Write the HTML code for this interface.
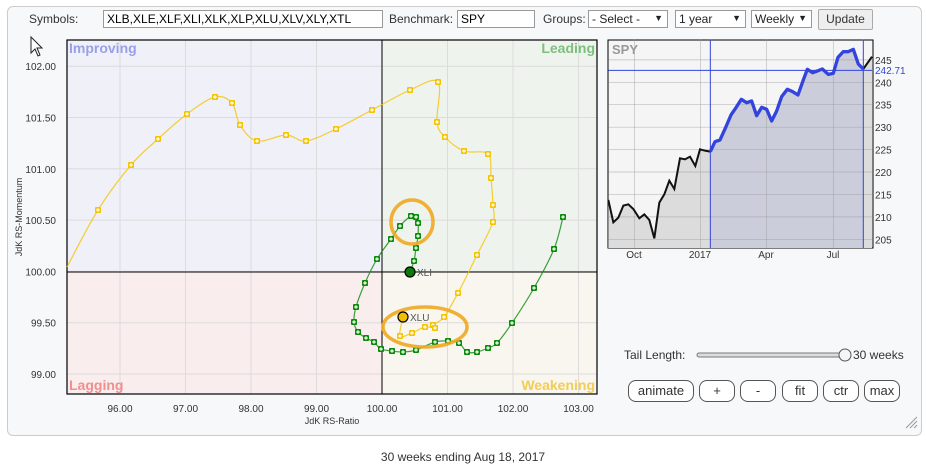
<!DOCTYPE html>
<html><head><meta charset="utf-8"><style>
body{margin:0;width:926px;height:471px;background:#fff;font-family:"Liberation Sans",sans-serif;position:relative;overflow:hidden}
.panel{position:absolute;left:7px;top:6px;width:913px;height:428px;border:1px solid #ccc;border-radius:6px;background:#f7f8fa}
.t{position:absolute;font-size:12px;color:#333}
input.f{position:absolute;height:18px;border:1px solid #999;background:#fff;font:12px "Liberation Sans",sans-serif;padding:0 3px;box-sizing:border-box;line-height:18px}
.sel{position:absolute;height:18px;border:1px solid #999;background:#fff;font-size:12px;box-sizing:border-box;padding:1px 3px;color:#222}
.sel:after{content:"▼";position:absolute;right:4px;top:2px;font-size:9px}
.btn{position:absolute;height:22px;border:1px solid #555;border-radius:8px;background:#fff;font-size:13px;text-align:center;line-height:20px;box-sizing:border-box;color:#333}
</style></head><body>
<div class="panel"></div>
<div class="t" style="left:29px;top:12px">Symbols:</div>
<input class="f" style="left:103px;top:10px;width:280px" value="XLB,XLE,XLF,XLI,XLK,XLP,XLU,XLV,XLY,XTL">
<div class="t" style="left:389px;top:12px">Benchmark:</div>
<input class="f" style="left:457px;top:10px;width:78px" value="SPY">
<div class="t" style="left:543px;top:12px">Groups:</div>
<div class="sel" style="left:588px;top:10px;width:80px">- Select -</div>
<div class="sel" style="left:675px;top:10px;width:71px">1 year</div>
<div class="sel" style="left:751px;top:10px;width:61px">Weekly</div>
<div class="btn" style="left:818px;top:9px;width:55px;height:21px;border-radius:2px;border-color:#aaa;background:#eee;font-size:12px;line-height:19px">Update</div>
<svg width="926" height="471" style="position:absolute;left:0;top:0" id="s" font-family="Liberation Sans, sans-serif">
<path d="M31 37 L31 53 L35 49 L38 56 L40 55 L37 48 L42 48 Z" fill="#fff" stroke="#222" stroke-width="1"/>
<rect x="67" y="40" width="315" height="232" fill="#eff0f8"/>
<rect x="382" y="40" width="215" height="232" fill="#eef3ee"/>
<rect x="67" y="272" width="315" height="122" fill="#f9eded"/>
<rect x="382" y="272" width="215" height="122" fill="#f8f6ee"/>
<g stroke="#dcdcdc" stroke-width="1" id="grid"></g>
<rect x="67" y="40" width="530" height="354" fill="none" stroke="#000" stroke-width="1.2"/>
<line x1="382" y1="40" x2="382" y2="394" stroke="#000"/>
<line x1="67" y1="272" x2="597" y2="272" stroke="#000"/>
<g font-size="14" font-weight="bold">
<text x="69" y="53" fill="#9aa0e8">Improving</text>
<text x="595" y="53" fill="#7cc07c" text-anchor="end">Leading</text>
<text x="69" y="390" fill="#f08f8f">Lagging</text>
<text x="595" y="390" fill="#f2cc55" text-anchor="end">Weakening</text>
</g>
<g font-size="10" fill="#333" id="ax"></g>
<text x="22" y="217" font-size="9" fill="#333" transform="rotate(-90 22 217)" text-anchor="middle">JdK RS-Momentum</text>
<text x="332" y="424" font-size="9" fill="#333" text-anchor="middle">JdK RS-Ratio</text>
<g id="tails"></g>
<ellipse cx="412" cy="222" rx="21" ry="22" fill="none" stroke="#f0a820" stroke-width="3.5" opacity=".9"/>
<ellipse cx="425" cy="327" rx="42" ry="20" fill="none" stroke="#f0a820" stroke-width="3.5" opacity=".9"/>
<circle cx="410" cy="272" r="5" fill="#0a7a0a" stroke="#000" stroke-width="1.2"/>
<text x="417" y="276" font-size="10" fill="#555">XLI</text>
<circle cx="403" cy="317" r="5" fill="#f0c000" stroke="#000" stroke-width="1.2"/>
<text x="410" y="321" font-size="10" fill="#555">XLU</text>
<rect x="608" y="40" width="265" height="208" fill="#f5f5f5" stroke="#000"/>
<g id="spy" transform="translate(600,30) scale(0.3333)"></g>
<text x="612" y="54" font-size="13" font-weight="bold" fill="#999">SPY</text>
<g font-size="10" fill="#333" id="sax"></g>
<text x="875" y="74" font-size="10" fill="#3344dd">242.71</text>
<text x="624" y="359" font-size="12" fill="#333">Tail Length:</text>
<rect x="697" y="353" width="148" height="4" rx="2" fill="#ddd" stroke="#777"/>
<circle cx="845" cy="355" r="6" fill="#f5f5f5" stroke="#555"/>
<text x="853" y="359" font-size="12" fill="#333">30 weeks</text>
<g stroke="#999" stroke-width="1"><line x1="906" y1="428" x2="917" y2="417"/><line x1="910" y1="428" x2="917" y2="421"/><line x1="914" y1="428" x2="917" y2="425"/></g>
<text x="463" y="461" font-size="12" fill="#333" text-anchor="middle">30 weeks ending Aug 18, 2017</text>
</svg>
<div class="btn" style="left:628px;top:380px;width:66px">animate</div>
<div class="btn" style="left:699px;top:380px;width:36px">+</div>
<div class="btn" style="left:740px;top:380px;width:36px">-</div>
<div class="btn" style="left:782px;top:380px;width:36px">fit</div>
<div class="btn" style="left:823px;top:380px;width:36px">ctr</div>
<div class="btn" style="left:864px;top:380px;width:36px">max</div>
<script>
var NS="http://www.w3.org/2000/svg";
function el(p,t,a){var e=document.createElementNS(NS,t);for(var k in a)e.setAttribute(k,a[k]);p.appendChild(e);return e}
var g=document.getElementById('grid'),ax=document.getElementById('ax');
for(var v=96;v<=103;v++){var x=382+(v-100)*65.5;el(g,'line',{x1:x,y1:40,x2:x,y2:394});var t=el(ax,'text',{x:x,y:412,'text-anchor':'middle'});t.textContent=v.toFixed(2)}
for(var i=0;i<=6;i++){var val=99+i*0.5,y=374-i*51.3;el(g,'line',{x1:67,y1:y,x2:597,y2:y});var t=el(ax,'text',{x:56,y:y+4,'text-anchor':'end'});t.textContent=val.toFixed(2)}
function cr(p){var d="M"+p[0][0]+" "+p[0][1];for(var i=0;i<p.length-1;i++){var p0=p[i-1]||p[i],p1=p[i],p2=p[i+1],p3=p[i+2]||p2;d+=" C"+(p1[0]+(p2[0]-p0[0])/6)+" "+(p1[1]+(p2[1]-p0[1])/6)+" "+(p2[0]-(p3[0]-p1[0])/6)+" "+(p2[1]-(p3[1]-p1[1])/6)+" "+p2[0]+" "+p2[1]}return d}
var Y=[[67,267],[98,210],[131,165],[158,139],[187,114],[215,97],[232,103],[240,125],[257,141],[286,135],[306,141],[336,129],[372,110],[410,90],[438,82],[437,122],[445,137],[464,151],[488,154],[491,178],[493,205],[493,222],[477,255],[458,293],[444,317],[433,325],[435,328],[425,327],[412,333],[400,336],[403,317]];
var G=[[563,217],[554,249],[534,288],[512,323],[497,343],[488,348],[477,352],[467,352],[459,343],[448,341],[435,342],[416,350],[403,352],[392,351],[381,349],[374,342],[366,338],[358,332],[354,322],[356,307],[365,283],[377,259],[391,239],[400,226],[411,216],[416,217],[418,223],[418,236],[416,248],[414,261],[410,272]];
var tl=document.getElementById('tails');
[[Y,'#f5c400',1],[G,'#0a8a0a',0]].forEach(function(s){var p=s[0],c=s[1];el(tl,'path',{d:cr(p),fill:'none',stroke:c,'stroke-width':1.2,opacity:.8});
for(var i=s[2];i<p.length-1;i++){var x=p[i][0],y=p[i][1];el(tl,'rect',{x:x-3,y:y-3,width:6,height:6,fill:c,rx:1});el(tl,'path',{d:'M'+(x-1.8)+' '+y+'H'+(x+1.8)+'M'+x+' '+(y-1.8)+'V'+(y+1.8),stroke:'#fff','stroke-width':1.2})}});
var sp=document.getElementById('spy'),sax=document.getElementById('sax');
var B=[[25,510],[40,577],[55,563],[70,527],[85,523],[100,537],[118,565],[133,553],[148,570],[163,625],[178,518],[193,493],[208,452],[223,477],[240,385],[255,388],[270,380],[286,408],[300,358],[315,362],[331,365]];
var L=[[331,365],[345,335],[360,330],[375,297],[393,255],[408,233],[424,208],[440,218],[455,213],[470,257],[485,232],[500,238],[515,273],[530,243],[545,200],[562,178],[578,185],[594,195],[610,150],[622,118],[638,128],[652,123],[667,117],[685,133],[700,130],[714,82],[730,65],[745,65],[760,58],[775,102],[790,117]];
var E=[[790,117],[816,80]];
function pts(a){return a.map(function(p){return p.join(',')}).join(' ')}
el(sp,'polygon',{points:pts(B)+' 331,654 25,654',fill:'#dcdcdc'});
el(sp,'polygon',{points:pts(L)+' 790,654 331,654',fill:'#cbcddb'});
el(sp,'polygon',{points:pts(E)+' 816,654 790,654',fill:'#dcdcdc'});
for(var k=0;k<9;k++){var yy=628-k*67.3;el(sp,'line',{x1:25,y1:yy,x2:816,y2:yy,stroke:'#999','stroke-width':2,opacity:.6});}
[103,302,500,700].forEach(function(x){el(sp,'line',{x1:x,y1:28,x2:x,y2:654,stroke:'#999','stroke-width':2,opacity:.6})});
el(sp,'polyline',{points:pts(B),fill:'none',stroke:'#111','stroke-width':6});
el(sp,'polyline',{points:pts(E),fill:'none',stroke:'#111','stroke-width':6});
el(sp,'polyline',{points:pts(L),fill:'none',stroke:'#3344dd','stroke-width':10,'stroke-linejoin':'round'});
el(sp,'line',{x1:331,y1:28,x2:331,y2:654,stroke:'#3344dd','stroke-width':3});
el(sp,'line',{x1:790,y1:28,x2:790,y2:654,stroke:'#3344dd','stroke-width':3});
el(sp,'line',{x1:25,y1:121,x2:816,y2:121,stroke:'#3344dd','stroke-width':3});
for(var k=0;k<9;k++){var v=205+k*5;var yy=30+(628-k*67.3)/3;var t=el(sax,'text',{x:875,y:yy+4});t.textContent=v;}
[['Oct',634],['2017',700],['Apr',766],['Jul',833]].forEach(function(a){var t=el(sax,'text',{x:a[1],y:258,'text-anchor':'middle'});t.textContent=a[0]});
</script>
</body></html>
